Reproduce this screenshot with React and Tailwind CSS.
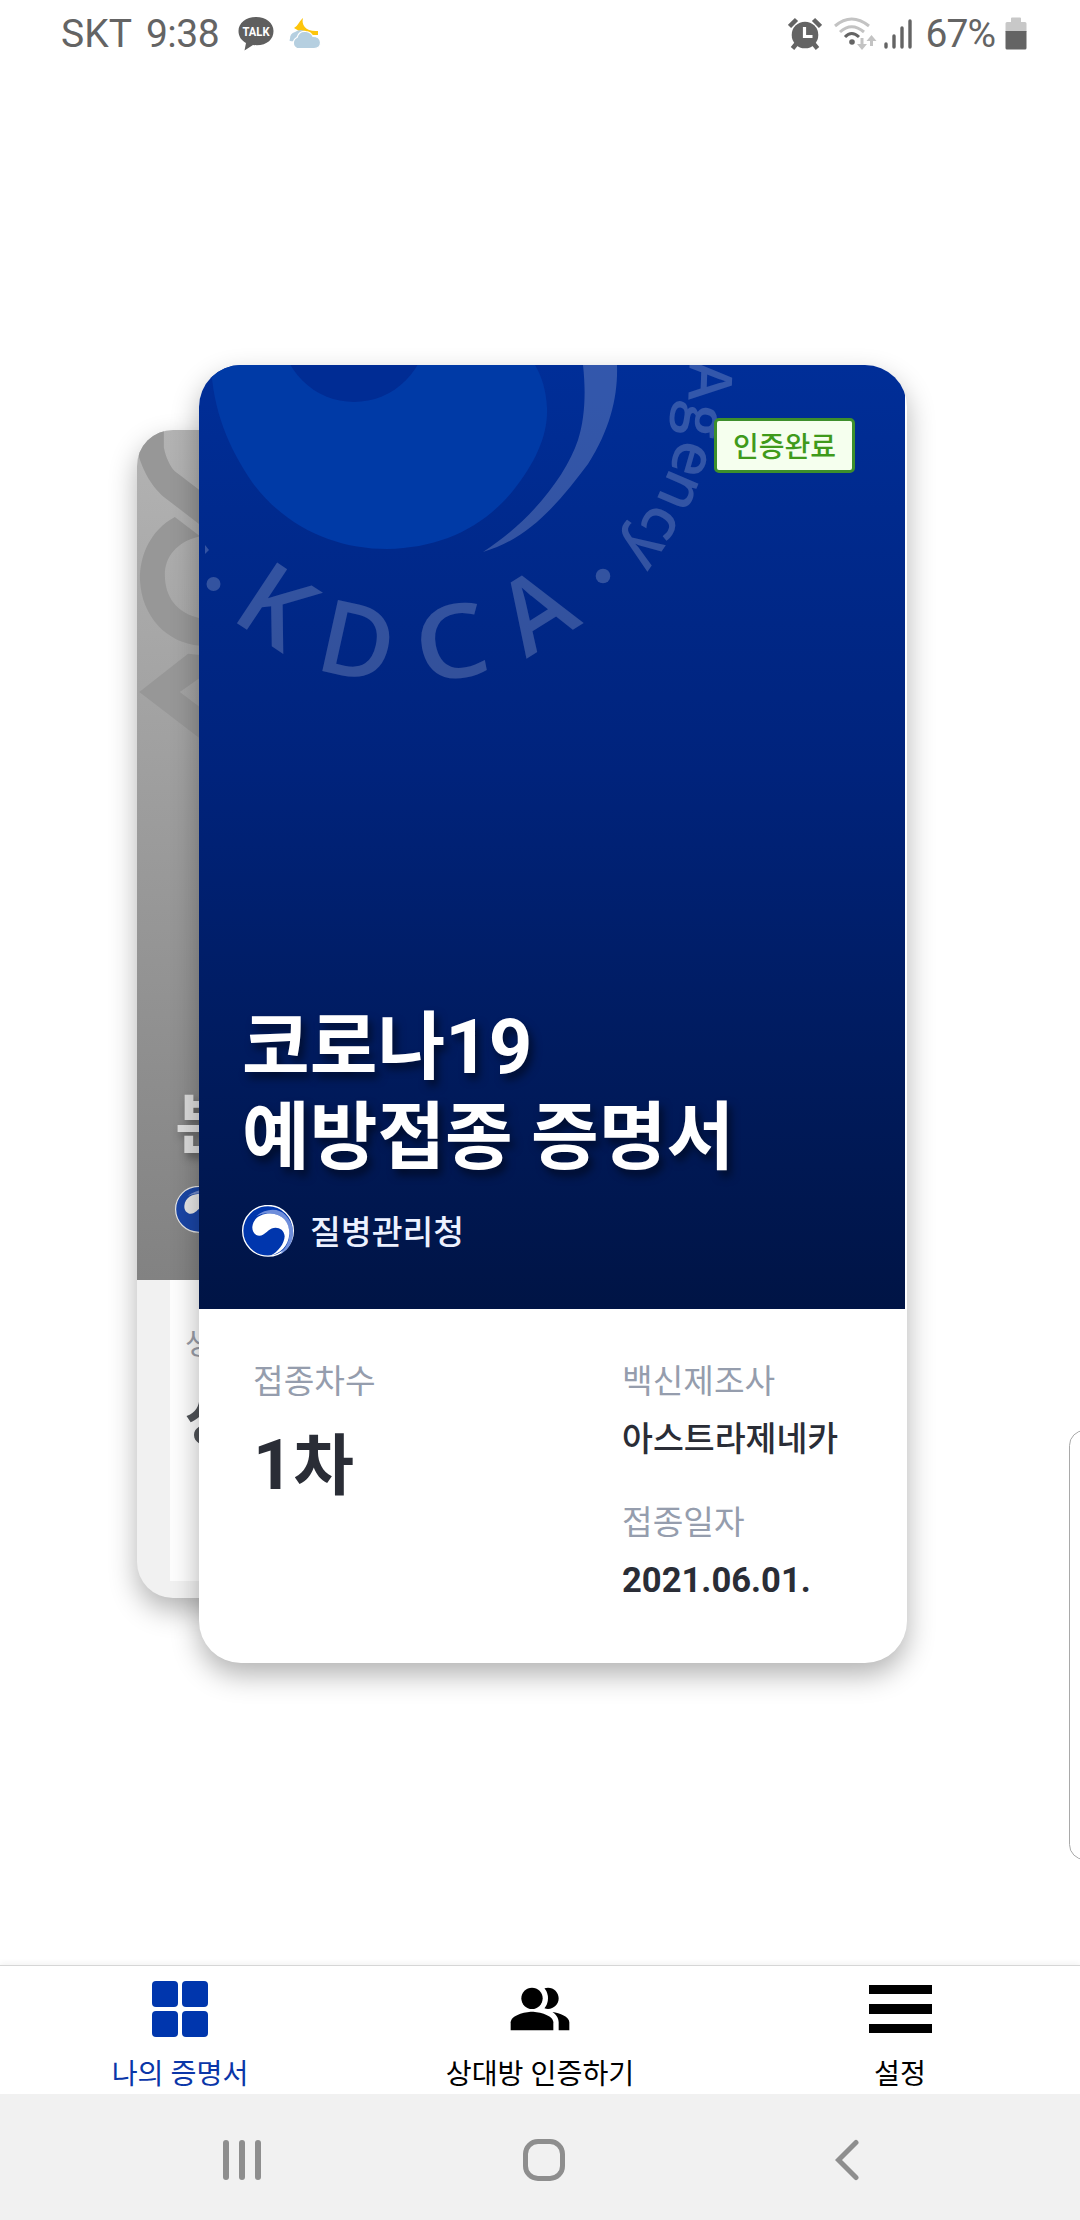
const hangul = "font-['Roboto','Noto_Sans_CJK_KR',sans-serif]";

const cardShadow = "shadow-[0_12px_28px_rgba(0,0,0,0.3)]";

function Emblem({ className }) {
  return (
    <svg viewBox="366 675 156 155" className={`shrink-0 ${className}`}>
      <circle cx="444" cy="752" r="76" fill="#0036ad" stroke="#fff" strokeWidth="4" />
      <path
        d="M408 708C440 682 478 684 497 705C515 725 521 745 519 765C516 795 500 812 480 822C500 800 509 780 508 760C506 725 488 702 450 700C438 698 422 702 408 708Z"
        fill="#6f8edb"
      />
      <path
        d="M397 740C400 712 425 700 450 700C488 702 508 725 508 760C506 800 480 820 450 827C475 815 493 790 494 768C492 745 470 738 455 745C440 752 435 765 418 767C405 766 396 755 397 740Z"
        fill="#fff"
      />
    </svg>
  );
}

const kdca = [
  { ch: "K", x: 229, y: 618, r: 33.5, sx: 1, anchor: "start" },
  { ch: "D", x: 313, y: 669, r: 12.4, sx: 1, anchor: "start" },
  { ch: "C", x: 458, y: 678, r: -11, sx: 1.13, anchor: "middle" },
  { ch: "A", x: 555, y: 641, r: -32, sx: 1, anchor: "middle" },
];

const agency = [
  { ch: "A", x: 689, y: 380, r: 92 },
  { ch: "g", x: 684, y: 418, r: 99 },
  { ch: "e", x: 674, y: 454, r: 106 },
  { ch: "n", x: 663, y: 484, r: 113 },
  { ch: "c", x: 646, y: 514, r: 120 },
  { ch: "y", x: 630, y: 540, r: 125 },
];

function Watermark() {
  return (
    <svg viewBox="199 365 706 944" className="absolute inset-0 h-full w-full">
      <path
        d="M211 365C213 410 228 447 252 482C286 528 336 549 387 549C440 548 482 528 512 492C536 462 548 435 547 408C546 390 542 377 535 365Z"
        fill="#003aa6"
      />
      <circle cx="354" cy="329" r="73" fill="#002c94" />
      <g fill="#fff" fillOpacity="0.2">
        <path d="M583 365C586 392 585 418 578 440C566 476 530 522 483 552C532 538 562 498 588 464C611 428 618 395 617 365Z" />
        <path d="M205 545L209 550L205 554Z" />
        <circle cx="213.500" cy="584" r="7" />
        <circle cx="603" cy="576" r="7.300" />
        <g className="font-['Open_Sans',sans-serif] text-[102px] font-semibold">
          {kdca.map((l) => (
            <text
              key={l.ch}
              textAnchor={l.anchor}
              transform={`translate(${l.x} ${l.y}) rotate(${l.r}) scale(${l.sx} 1)`}
            >
              {l.ch}
            </text>
          ))}
        </g>
        <g className="font-['Open_Sans',sans-serif] text-[60px] font-semibold">
          {agency.map((l) => (
            <text
              key={l.ch}
              textAnchor="middle"
              transform={`translate(${l.x} ${l.y}) rotate(${l.r})`}
            >
              {l.ch}
            </text>
          ))}
        </g>
      </g>
    </svg>
  );
}

function BackCard() {
  return (
    <div
      className={`absolute top-[65px] left-[-62px] h-[1168px] w-[637px] overflow-hidden rounded-[36px] bg-[#f1f1f1] ${cardShadow}`}
    >
      <div className="relative flex h-[850px] flex-col justify-end bg-linear-to-b from-[#b3b3b3] to-[#828282] pb-[47px] pl-[38px]">
        <svg viewBox="51 240 190 930" className="absolute top-0 left-0 h-[310px] w-[63px]">
          <g fill="#979797">
            <path d="M51 240H132V290C138 320 150 345 165 362L241 420V523L130 438C95 405 72 370 51 300Z" />
            <path d="M165 500C90 540 58 620 60 690C65 800 140 880 241 888V805C170 790 135 740 135 675C135 620 170 575 241 558Z" />
            <path d="M58 1028L205 912L241 916V985L180 1028L241 1074V1168Z" />
          </g>
        </svg>
        <p className="text-[66px] leading-[80px] font-bold text-[#dcdcdc] text-shadow-[3px_5px_8px_rgba(0,0,0,0.35)]">
          본
        </p>
        <Emblem className="mt-[20px] size-[47px] opacity-80" />
      </div>
      <div className="ml-[33px] h-[301px] bg-[#fdfdfd] pt-[42px] pl-[15px]">
        <p className="text-[30px] leading-[44px] text-[#9a9da8]">생</p>
        <p className="mt-[22px] text-[59px] leading-[64px] font-bold text-[#505358]">상</p>
      </div>
    </div>
  );
}

function Field({ label, children }) {
  return (
    <div>
      <p className="text-[33.300px] leading-[48px] text-[#959dad]">{label}</p>
      {children}
    </div>
  );
}

function FrontCard() {
  return (
    <div
      className={`relative h-[1298px] w-[708px] overflow-hidden rounded-[42px] bg-white ${cardShadow}`}
    >
      <div className="relative mr-[2px] h-[944px] bg-linear-to-b from-[#002e98] via-[#00237c] via-43% to-[#001445]">
        <Watermark />
        <span className="absolute top-[53px] right-[50px] flex h-[55px] w-[141px] items-center justify-center rounded-[5px] border-3 border-[#3d8f2c] bg-[#f5ffee] pt-[4px] text-[28px] font-medium text-[#3f9a1b]">
          인증완료
        </span>
        <div className="relative flex h-full flex-col justify-end pb-[51px] pl-[43px]">
          <h1 className="text-[73.600px] leading-[90px] font-bold text-white text-shadow-[4px_6px_9px_rgba(0,0,0,0.5)]">
            코로나<span className="text-[76px] leading-none">19</span>
            <br />
            예방접종 증명서
          </h1>
          <div className="mt-[21px] flex h-[54px] items-center gap-[16px]">
            <Emblem className="size-[52px]" />
            <span className="pt-[4px] text-[33.500px] font-medium text-[#ecf1ff]">질병관리청</span>
          </div>
        </div>
      </div>
      <div className="flex h-[354px] pt-[49px] pl-[54px]">
        <div className="w-[369px]">
          <Field label="접종차수">
            <p className="mt-[16px] text-[66px] leading-[90px] font-bold text-[#2a2d36]">
              <span className="text-[70px] leading-none">1</span>차
            </p>
          </Field>
        </div>
        <div className="flex flex-col gap-[35px]">
          <Field label="백신제조사">
            <p className="mt-[10px] text-[33.600px] leading-[48px] font-medium text-[#2a2d36]">
              아스트라제네카
            </p>
          </Field>
          <Field label="접종일자">
            <p className="mt-[9px] text-[34.600px] leading-[48px] font-bold text-[#2a2d36]">
              2021.06.01.
            </p>
          </Field>
        </div>
      </div>
    </div>
  );
}

function StatusBar() {
  return (
    <header className="flex h-[68px] items-center justify-between pr-[53px] pl-[61px] text-[39px] leading-none text-[#646464]">
      <div className="flex items-center">
        <span>SKT</span>
        <span className="ml-[14px] tracking-[-0.5px]">9:38</span>
        <svg width="36" height="34" viewBox="0 0 36 34" className="ml-[19px]">
          <path
            d="M18 0C8 0 .5 6 .5 14c0 5.500 3 9.500 7.500 12l-1.500 7.500L15 28c13 1.500 20.500-5 20.500-14C35.500 6 28 0 18 0z"
            fill="#5f5f5f"
          />
          <text x="18" y="19" textAnchor="middle" fill="#fff" className="text-[13px] font-bold" textLength="27" lengthAdjust="spacingAndGlyphs">
            TALK
          </text>
        </svg>
        <svg width="34" height="32" viewBox="0 0 34 32" className="ml-[14px]">
          <path d="M15 0C13 7 18 14 30 13V17H18L6 10C10 8 12 2 15 0Z" fill="#fdc50c" />
          <path d="M2 21a7 7 0 0 1 5-7q6-4 11 0l-6 4-6 5q-6 1-4-2z" fill="#b5cfe0" />
          <path
            d="M9 30.500a6 6 0 0 1 0-11q2-7 9-6 5 .5 7 5 7 0 7.500 6 0 6-6.500 6z"
            fill="#b5cfe0"
            stroke="#fff"
            strokeWidth="1.200"
          />
        </svg>
      </div>
      <div className="flex items-center">
        <svg width="34" height="34" viewBox="0 0 34 34">
          <g stroke="#646464" strokeLinecap="butt" strokeWidth="4.500">
            <path d="M1.500 9.500L8.500 2.500M32.500 9.500L25.500 2.500M4.500 31.500L9 26M29.500 31.500L25 26" />
          </g>
          <circle cx="17" cy="18" r="13.300" fill="#646464" />
          <path d="M16.500 10v9.500h8" fill="none" stroke="#fff" strokeWidth="3.200" />
        </svg>
        <svg width="43" height="34" viewBox="0 0 43 34" className="ml-[12px]" fill="none">
          <path d="M1 9Q17.500 -5 35 9M6 15Q17.500 4.500 30 15" stroke="#c3c3c3" strokeWidth="3" />
          <path d="M11 20Q17.500 13 25 20" stroke="#646464" strokeWidth="3" />
          <circle cx="18" cy="25" r="2.800" fill="#646464" />
          <path d="M28 21v8M37.500 29V22" stroke="#c3c3c3" strokeWidth="3" />
          <path d="M23 27h10l-5 6zM32.500 24h10l-5-6z" fill="#c3c3c3" />
        </svg>
        <svg width="28" height="32" viewBox="0 0 28 32" className="ml-[7px]">
          <g stroke="#646464" strokeWidth="3.400" strokeLinecap="round">
            <path d="M2 26v3M10 18v11M18 10v19M26 3v26" />
          </g>
        </svg>
        <span className="ml-[14px] tracking-[-1px]">67%</span>
        <svg width="22" height="34" viewBox="0 0 22 34" className="ml-[10px]">
          <path d="M6 5V1.500Q6 .5 7 .5H15Q16 .5 16 1.500V5H20Q21.500 5 21.500 6.500V15H.5V6.500Q.5 5 2 5Z" fill="#c8c8c8" />
          <path d="M.5 14H21.500V31Q21.500 32.500 20 32.500H2Q.5 32.500 .5 31Z" fill="#646464" />
        </svg>
      </div>
    </header>
  );
}

function Tab({ label, active, children }) {
  return (
    <div
      className={`flex flex-1 flex-col items-center ${active ? "text-[#0a36a8]" : "text-black"}`}
    >
      <div className="flex h-[87px] items-center">{children}</div>
      <span className="mt-[5px] text-[28.200px] leading-[38px]">{label}</span>
    </div>
  );
}

function TabBar() {
  return (
    <nav className="flex h-[129px] border-t border-[#d6d6d6] bg-white shadow-[0_-2px_6px_rgba(0,0,0,0.05)]">
      <Tab label="나의 증명서" active>
        <div className="grid grid-cols-2 gap-[4px]">
          <span className="h-[26px] w-[26px] rounded-[4px] bg-[#0036ad]" />
          <span className="h-[26px] w-[26px] rounded-[4px] bg-[#0036ad]" />
          <span className="h-[26px] w-[26px] rounded-[4px] bg-[#0036ad]" />
          <span className="h-[26px] w-[26px] rounded-[4px] bg-[#0036ad]" />
        </div>
      </Tab>
      <Tab label="상대방 인증하기">
        <svg viewBox="0 0 24 24" className="size-[64px]" fill="currentColor">
          <path d="M16.670 13.130C18.040 14.060 19 15.320 19 17v3h4v-3c0-2.180-3.570-3.470-6.330-3.870z" />
          <circle cx="9" cy="8" r="4" />
          <path d="M15 12c2.210 0 4-1.790 4-4s-1.790-4-4-4c-.47 0-.91.1-1.330.24a5.980 5.980 0 0 1 0 7.520c.42.14.86.24 1.330.24z" />
          <path d="M9 13c-2.670 0-8 1.340-8 4v3h16v-3c0-2.660-5.330-4-8-4z" />
        </svg>
      </Tab>
      <Tab label="설정">
        <div className="flex w-[63px] flex-col gap-[10px]">
          <span className="h-[9px] bg-black" />
          <span className="h-[10px] bg-black" />
          <span className="h-[9px] bg-black" />
        </div>
      </Tab>
    </nav>
  );
}

function SystemNav() {
  return (
    <footer className="flex h-[126px] items-center bg-[#f1f1f1] pt-[5px] pl-[223px]">
      <div className="flex gap-[10px]">
        <span className="h-[40px] w-[6px] rounded-full bg-[#8e8e8e]" />
        <span className="h-[40px] w-[6px] rounded-full bg-[#8e8e8e]" />
        <span className="h-[40px] w-[6px] rounded-full bg-[#8e8e8e]" />
      </div>
      <span className="ml-[262px] h-[42px] w-[42px] rounded-[15px] border-5 border-[#8e8e8e]" />
      <svg width="24" height="42" viewBox="0 0 24 42" className="ml-[270px]" fill="none">
        <path d="M21 3.500L3.500 21L21 38.500" stroke="#8e8e8e" strokeWidth="5" strokeLinecap="round" />
      </svg>
    </footer>
  );
}

export default function App() {
  return (
    <div className={`relative flex h-[2220px] w-[1080px] flex-col overflow-hidden bg-white ${hangul}`}>
      <StatusBar />
      <main className="flex-1 pt-[297px] pl-[199px]">
        <div className="relative w-[708px]">
          <BackCard />
          <FrontCard />
        </div>
      </main>
      {/* edge panel handle */}
      <div className="absolute top-[1430px] right-[-20px] h-[430px] w-[31px] rounded-[16px] border border-[#a9a9a9]" />
      <TabBar />
      <SystemNav />
    </div>
  );
}
